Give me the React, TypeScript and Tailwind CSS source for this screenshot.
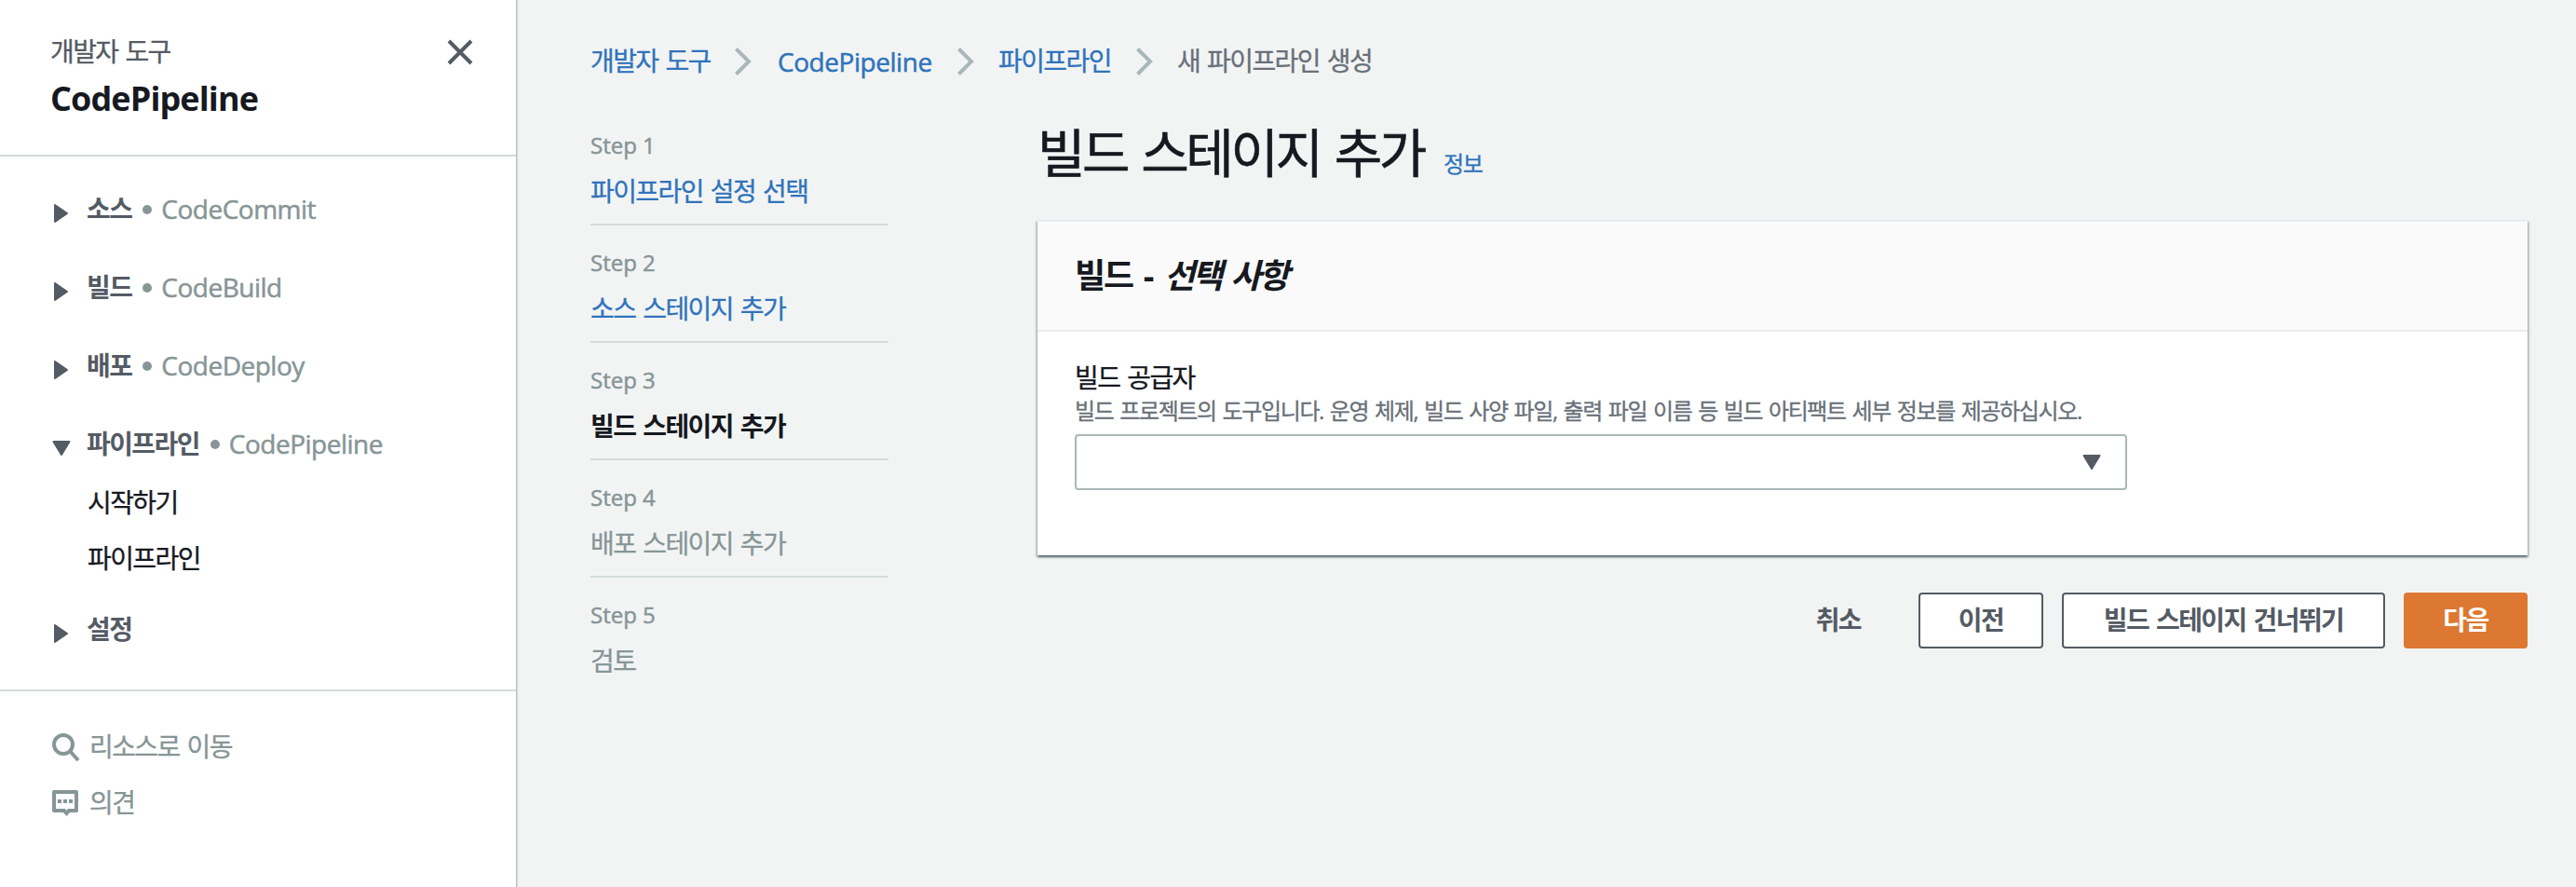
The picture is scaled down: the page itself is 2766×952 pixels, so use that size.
import { ReactNode } from "react";

const KO = "tracking-[-0.057em] [word-spacing:0.08em]";
const SOLID = "[-webkit-text-stroke:0.3px_currentColor]";
const LATIN = "[-webkit-text-stroke:0.5px_currentColor]";

function CaretRight() {
  return (
    <svg width="20" height="22" viewBox="0 0 20 22" className="text-[#545b64]">
      <path d="M3 2 L16 11 L3 20 Z" fill="currentColor" stroke="currentColor" strokeWidth="2" strokeLinejoin="round" />
    </svg>
  );
}

function CaretDown() {
  return (
    <svg width="20" height="18" viewBox="0 0 20 18" className="text-[#545b64]">
      <path d="M1.5 2 H18.5 L10 16 Z" fill="currentColor" stroke="currentColor" strokeWidth="2" strokeLinejoin="round" />
    </svg>
  );
}

function Chevron() {
  return (
    <svg width="20" height="32" viewBox="0 0 20 32" className="shrink-0">
      <path d="M2.5 2.5 L16 16 L2.5 29.5" fill="none" stroke="#aab7b8" strokeWidth="4" />
    </svg>
  );
}

type NavProps = { label: string; service?: string; open?: boolean };

function NavItem({ label, service, open }: NavProps) {
  return (
    <div className="flex h-[84px] items-center text-[28px] leading-none">
      <span className="flex w-[37px] shrink-0 pt-2">{open ? <CaretDown /> : <CaretRight />}</span>
      <span className={`-mt-[2px] font-bold text-[#545b64] ${KO}`}>{label}</span>
      {service && (
        <span className="-mt-[2px] flex items-center text-[#879596]">
          <span className="mt-[2px] mr-[10px] ml-[12px] size-[10px] rounded-full bg-[#879596]" />
          <span className={`tracking-[-0.5px] ${LATIN}`}>{service}</span>
        </span>
      )}
    </div>
  );
}

function Sidebar() {
  return (
    <aside className="z-10 flex w-[554px] shrink-0 flex-col bg-white shadow-[0_0_2px_1px_rgba(0,28,36,0.35)]">
      <header className="flex h-[168px] justify-between border-b-2 border-[#d5dbdb] pr-[46px] pl-[54px]">
        <div className="pt-[33px]">
          <p className={`text-[28px] leading-[44px] text-[#545b64] ${KO} ${SOLID}`}>개발자 도구</p>
          <h2 className="text-[36px] leading-[58px] font-bold tracking-[-0.9px] text-[#16191f]">CodePipeline</h2>
        </div>
        <svg width="28" height="28" viewBox="0 0 28 28" className="mt-[42px]">
          <path d="M2 2 L26 26 M26 2 L2 26" stroke="#545b64" strokeWidth="4" fill="none" />
        </svg>
      </header>
      <nav className="flex h-[574px] flex-col border-b-2 border-[#d5dbdb] pt-[15px] pl-[56px]">
        <NavItem label="소스" service="CodeCommit" />
        <NavItem label="빌드" service="CodeBuild" />
        <NavItem label="배포" service="CodeDeploy" />
        <NavItem label="파이프라인" service="CodePipeline" open />
        <div className={`flex flex-col pl-[38px] text-[28px] leading-[60px] text-[#16191f] ${KO} ${SOLID}`}>
          <span className="-mt-[10px]">시작하기</span>
          <span>파이프라인</span>
        </div>
        <div className="mt-[5px]">
          <NavItem label="설정" />
        </div>
      </nav>
      <div className={`flex flex-col pt-[29px] pl-[56px] text-[28px] leading-[60px] text-[#879596] ${KO} ${SOLID}`}>
        <div className="flex items-center gap-[10px]">
          <svg width="30" height="32" viewBox="0 0 30 32" fill="none" stroke="currentColor" strokeWidth="4" className="mt-[2px]">
            <circle cx="12" cy="13" r="10" />
            <path d="M19 20 L28 30" />
          </svg>
          <span>리소스로 이동</span>
        </div>
        <div className="flex items-center gap-[12px]">
          <svg width="28" height="28" viewBox="0 0 28 28" fill="currentColor" className="mt-[2px]">
            <path fillRule="evenodd" d="M2 0 H26 Q28 0 28 2 V22 Q28 24 26 24 H19 L15.5 28 L12 24 H2 Q0 24 0 22 V2 Q0 0 2 0 Z M4 4 V20 H14 L15.5 22 L17 20 H24 V4 Z" />
            <path d="M6 10 h4 v4 h-4 Z M12 10 h4 v4 h-4 Z M18 10 h4 v4 h-4 Z" />
          </svg>
          <span>의견</span>
        </div>
      </div>
    </aside>
  );
}

function Breadcrumbs() {
  return (
    <nav className="flex h-[60px] items-center text-[28px] leading-none text-[#2f73bb]">
      <span className={`-mt-[2px] w-[154px] ${KO} ${SOLID}`}>개발자 도구</span>
      <Chevron />
      <span className={`-mt-[1px] ml-[27px] w-[192px] tracking-[-0.45px] ${LATIN}`}>CodePipeline</span>
      <Chevron />
      <span className={`-mt-[2px] ml-[25px] w-[147px] ${KO} ${SOLID}`}>파이프라인</span>
      <Chevron />
      <span className={`-mt-[2px] ml-[25px] text-[#687078] ${KO} ${SOLID}`}>새 파이프라인 생성</span>
    </nav>
  );
}

const steps = [
  { name: "파이프라인 설정 선택", style: "text-[#2f73bb]" },
  { name: "소스 스테이지 추가", style: "text-[#2f73bb]" },
  { name: "빌드 스테이지 추가", style: "font-bold text-[#16191f]" },
  { name: "배포 스테이지 추가", style: "text-[#879596]" },
  { name: "검토", style: "text-[#879596]" },
];

function Steps() {
  return (
    <ol className="flex w-[320px] shrink-0 flex-col">
      {steps.map((s, i) => (
        <li key={s.name} className={`h-[126px] pt-[18px] ${i < steps.length - 1 ? "border-b-2 border-[#d5dbdb]" : ""}`}>
          <p className={`text-[24px] leading-[44px] text-[#879596] ${LATIN}`}>Step {i + 1}</p>
          <p className={`text-[28px] leading-[54px] ${KO} ${i === 2 ? "" : SOLID} ${s.style}`}>{s.name}</p>
        </li>
      ))}
    </ol>
  );
}

function Button({ className, children }: { className: string; children: ReactNode }) {
  return (
    <button className={`flex h-[60px] items-center justify-center rounded-[4px] pb-[2px] text-[28px] leading-none font-bold ${KO} ${className}`}>
      {children}
    </button>
  );
}

function BuildForm() {
  return (
    <section className="flex w-[1600px] flex-col">
      <div className="flex h-[120px] items-baseline">
        <h1 className="text-[56px] leading-[94px] tracking-[-0.061em] text-[#16191f] [-webkit-text-stroke:0.6px_currentColor] [word-spacing:0.07em]">
          빌드 스테이지 추가
        </h1>
        <a className={`ml-[21px] text-[24px] text-[#2f73bb] ${KO} ${SOLID}`}>정보</a>
      </div>
      <div className="h-[360px] bg-white shadow-[0_2px_2px_0_rgba(0,28,36,0.5),2px_2px_2px_0_rgba(0,28,36,0.15),-2px_2px_2px_0_rgba(0,28,36,0.15)]">
        <h2 className="flex h-[120px] items-center border-y-2 border-[#eaeded] bg-[#fafafa] pl-[40px] text-[36px] leading-none font-bold tracking-[-0.057em] whitespace-pre text-[#16191f] [word-spacing:0.12em]">
          빌드 - <i className="ml-[1px] tracking-[-0.08em]">선택 사항</i>
        </h2>
        <div className="flex flex-col pt-[29px] pl-[40px]">
          <label className={`text-[28px] leading-[40px] text-[#16191f] ${KO} ${SOLID}`}>빌드 공급자</label>
          <p className={`text-[24px] leading-[32px] text-[#687078] ${KO} ${SOLID}`}>
            빌드 프로젝트의 도구입니다. 운영 체제, 빌드 사양 파일, 출력 파일 이름 등 빌드 아티팩트 세부 정보를 제공하십시오.
          </p>
          <div className="mt-[9px] flex h-[60px] w-[1130px] items-center justify-end rounded-[4px] border-2 border-[#aab7b8] pr-[26px]">
            <CaretDown />
          </div>
        </div>
      </div>
      <div className="mt-[40px] flex justify-end gap-[20px]">
        <Button className="mr-[42px] text-[#545b64]">취소</Button>
        <Button className="w-[134px] border-2 border-[#545b64] bg-white text-[#545b64]">이전</Button>
        <Button className="w-[347px] border-2 border-[#545b64] bg-white text-[#545b64]">빌드 스테이지 건너뛰기</Button>
        <Button className="w-[133px] bg-[#dd7832] text-white">다음</Button>
      </div>
    </section>
  );
}

export default function App() {
  return (
    <div className="flex h-[952px] w-[2766px] overflow-hidden bg-[#f2f4f4] font-['Open_Sans','Noto_Sans_CJK_KR',sans-serif]">
      <Sidebar />
      <main className="flex flex-col pt-[36px] pl-[80px]">
        <Breadcrumbs />
        <div className="flex gap-[160px] pt-[20px]">
          <Steps />
          <BuildForm />
        </div>
      </main>
    </div>
  );
}
